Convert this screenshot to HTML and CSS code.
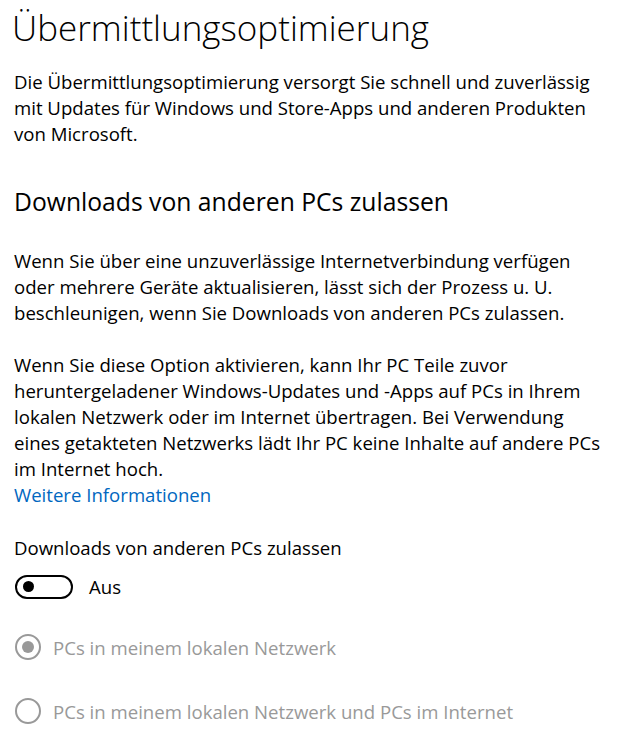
FILE: index.html
```html
<!DOCTYPE html>
<html lang="de">
<head>
    <meta charset="UTF-8">
    <meta name="viewport" content="width=device-width, initial-scale=1.0">
    <title>Übermittlungsoptimierung</title>
    <link rel="stylesheet" href="styles.css">
</head>
<body>
    <div class="page">
        <h1 class="title">Übermittlungsoptimierung</h1>
        <p class="intro">Die Übermittlungsoptimierung versorgt Sie schnell und zuverlässig mit Updates für Windows und Store-Apps und anderen Produkten von Microsoft.</p>

        <h2 class="subtitle">Downloads von anderen PCs zulassen</h2>
        <p class="text">Wenn Sie über eine unzuverlässige Internetverbindung verfügen oder mehrere Geräte aktualisieren, lässt sich der Prozess u. U. beschleunigen, wenn Sie Downloads von anderen PCs zulassen.</p>
        <p class="text second">Wenn Sie diese Option aktivieren, kann Ihr PC Teile zuvor heruntergeladener Windows-Updates und -Apps auf PCs in Ihrem lokalen Netzwerk oder im Internet übertragen. Bei Verwendung eines getakteten Netzwerks lädt Ihr PC keine Inhalte auf andere PCs im Internet hoch.</p>
        <a class="link" href="#">Weitere Informationen</a>

        <div class="label">Downloads von anderen PCs zulassen</div>
        <div class="toggle-row">
            <span class="toggle"><span class="knob"></span></span>
            <span class="toggle-text">Aus</span>
        </div>

        <div class="radio-row">
            <span class="radio checked"></span>
            <span>PCs in meinem lokalen Netzwerk</span>
        </div>
        <div class="radio-row">
            <span class="radio"></span>
            <span>PCs in meinem lokalen Netzwerk und PCs im Internet</span>
        </div>
    </div>
</body>
</html>
```

FILE: styles.css
```css
*{
    margin: 0;
    padding: 0;
    box-sizing: border-box;
}
body{
    font-family: "Open Sans", "Noto Sans", sans-serif;
    background-color: #ffffff;
    color: #000000;
}

.page{
    padding: 0 32px 0 14px;
}

.title{
    font-size: 35px;
    font-weight: 300;
    line-height: 44px;
    margin-left: -2px;
    padding-top: 6px;
}

.intro{
    font-size: 18.6px;
    line-height: 26px;
    margin-top: 19px;
}

.subtitle{
    font-size: 24.7px;
    font-weight: 400;
    line-height: 32px;
    margin-top: 39px;
}

.text{
    font-size: 18.6px;
    line-height: 26px;
    margin-top: 30px;
}
.text.second{
    margin-top: 26px;
}

.link{
    display: block;
    font-size: 18.6px;
    line-height: 26px;
    color: #0067c0;
    text-decoration: none;
}

.label{
    font-size: 18.6px;
    line-height: 26px;
    margin-top: 27px;
}

.toggle-row{
    display: flex;
    align-items: center;
    gap: 16px;
    margin-top: 13px;
    font-size: 18.6px;
}
.toggle{
    width: 58px;
    height: 24px;
    border: 2px solid #000000;
    border-radius: 12px;
    display: flex;
    align-items: center;
    padding-left: 6px;
    margin-left: 1px;
}
.knob{
    width: 11px;
    height: 11px;
    border-radius: 50%;
    background-color: #000000;
}

.radio-row{
    display: flex;
    align-items: center;
    gap: 12px;
    margin-top: 35px;
    font-size: 18.6px;
    color: #999999;
}
.radio-row + .radio-row{
    margin-top: 38px;
}
.radio{
    width: 26px;
    height: 26px;
    border: 2px solid #999999;
    border-radius: 50%;
    display: flex;
    align-items: center;
    justify-content: center;
    margin-left: 1px;
}
.radio.checked::after{
    content: "";
    width: 12px;
    height: 12px;
    border-radius: 50%;
    background-color: #999999;
}
```
